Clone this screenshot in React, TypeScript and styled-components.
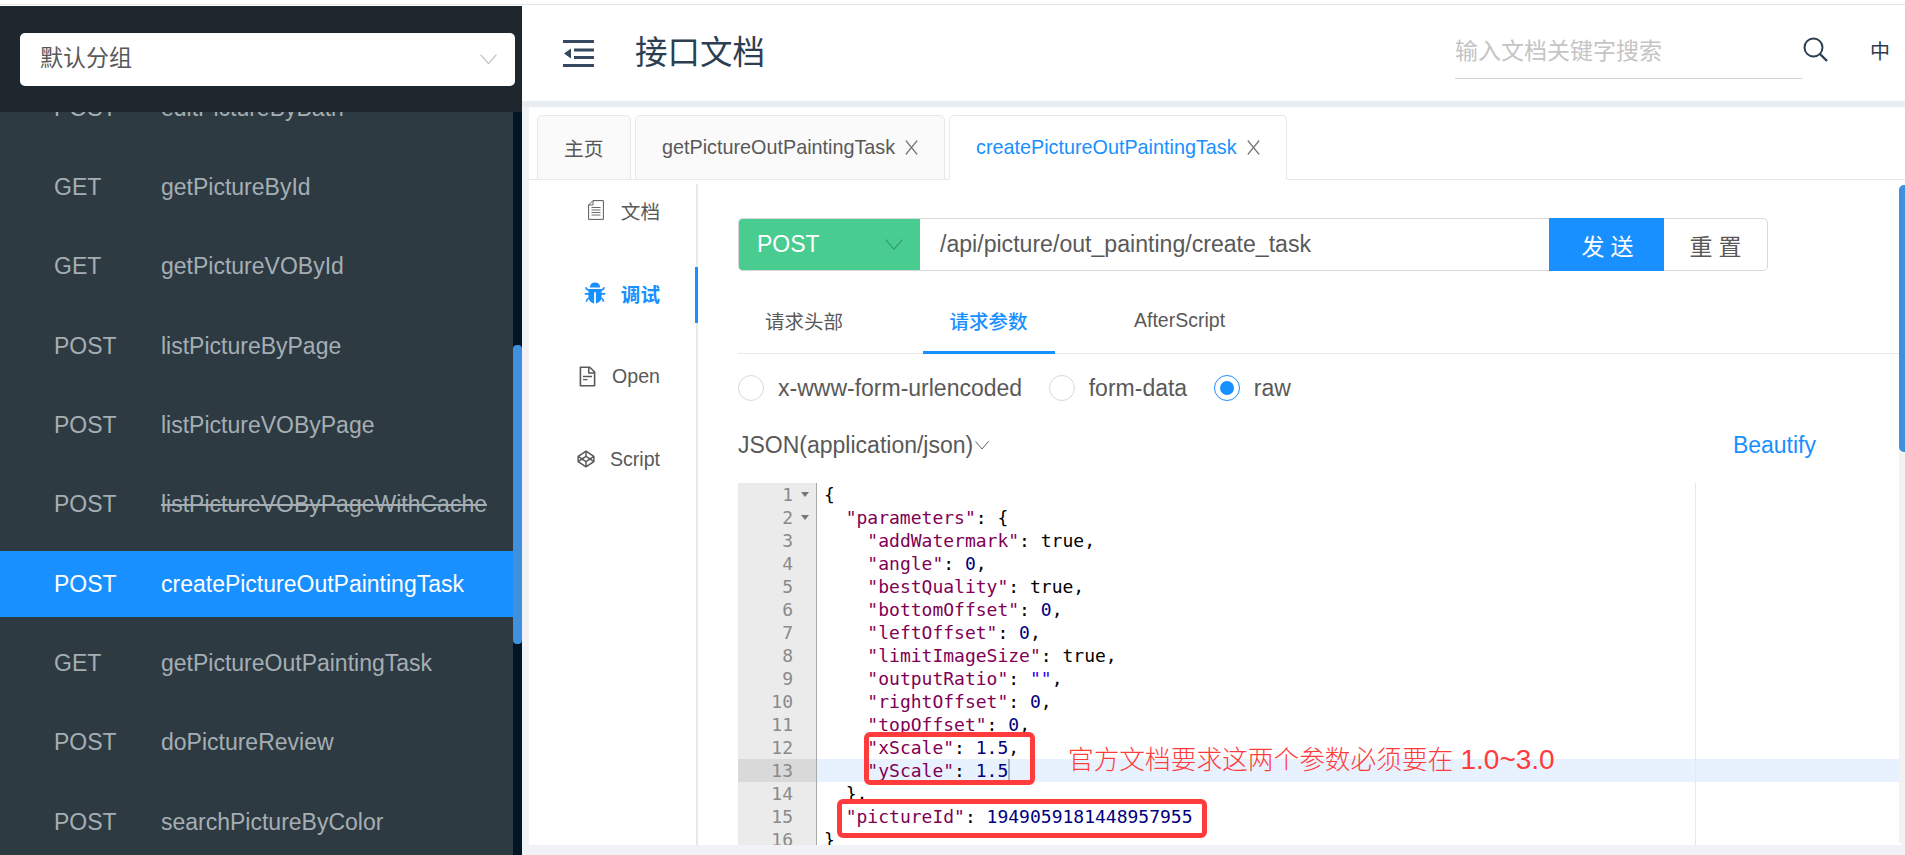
import React from 'react';
import styled, { createGlobalStyle } from 'styled-components';
import { AiFillBug, AiOutlineFileText, AiOutlineCodepen } from 'react-icons/ai';

const GlobalStyle = createGlobalStyle`
  html, body {
    margin: 0;
    padding: 0;
    width: 1905px;
    height: 855px;
    overflow: hidden;
    background: #fff;
    font-family: "Liberation Sans", "Noto Sans CJK SC", sans-serif;
  }
  * { box-sizing: border-box; }
`;

const Page = styled.div`
  width: 1905px;
  height: 855px;
  display: flex;
  flex-direction: column;
  overflow: hidden;
`;

const TopStrip = styled.div`
  flex: none;
  height: 5px;
  background: #fff;
  border-bottom: 1px solid #e4e4e4;
`;

const Layout = styled.div`
  flex: 1;
  min-height: 0;
  display: flex;
`;

const Sidebar = styled.aside`
  flex: none;
  width: 522px;
  margin-top: 1px;
  display: flex;
  flex-direction: column;
  background: #2d3a42;
`;

const SideHeader = styled.div`
  flex: none;
  height: 106px;
  padding: 27px 7px 0 20px;
  background: #1f272e;
`;

const GroupSelect = styled.div`
  height: 53px;
  padding: 0 18px 0 20px;
  display: flex;
  align-items: center;
  justify-content: space-between;
  background: #fff;
  border-radius: 5px;
  color: #595959;
  font-size: 23px;
`;

const GroupLabel = styled.span`
  margin-top: -7px;
`;

const SideBody = styled.div`
  flex: 1;
  min-height: 0;
  display: flex;
  overflow: hidden;
`;

const ApiList = styled.ul`
  flex: 1;
  margin: -37px 0 0;
  padding: 0;
  list-style: none;
`;

const ApiRow = styled.li<{ $active?: boolean }>`
  height: 66px;
  margin-bottom: 13.35px;
  padding-left: 54px;
  display: flex;
  align-items: center;
  font-size: 23px;
  background: ${p => (p.$active ? '#1890ff' : 'transparent')};
  color: ${p => (p.$active ? '#fff' : '#a5aeb3')};
`;

const ApiMethod = styled.span`
  width: 107px;
`;

const ApiName = styled.span<{ $deprecated?: boolean }>`
  text-decoration: ${p => (p.$deprecated ? 'line-through' : 'none')};
`;

const SideTrack = styled.div`
  flex: none;
  width: 9px;
  background: #001528;
`;

const SideThumb = styled.div`
  width: 9px;
  height: 299px;
  margin-top: 233px;
  border-radius: 4px;
  background: #4090e0;
`;

const Main = styled.main`
  flex: 1;
  min-width: 0;
  display: flex;
  flex-direction: column;
  background: #f0f2f5;
`;

const MainHeader = styled.header`
  flex: none;
  height: 102px;
  padding-left: 41px;
  display: flex;
  align-items: center;
  background: #fff;
  border-bottom: 6px solid #e9edf0;
`;

const HeaderTitle = styled.h1`
  margin: 0 0 8px 41px;
  font-size: 32.5px;
  font-weight: 400;
  color: #2c3e50;
`;

const SearchBox = styled.div`
  margin-left: auto;
  width: 347px;
  height: 54px;
  margin-top: -2px;
  border-bottom: 1px solid #d4d4d4;
  display: flex;
  align-items: center;
`;

const SearchInput = styled.input`
  width: 100%;
  border: none;
  outline: none;
  padding: 0;
  font-family: inherit;
  font-size: 23px;
  background: transparent;
  &::placeholder { color: #c4c4c4; opacity: 1; }
`;

const SearchIcon = styled.svg`
  flex: none;
  width: 25px;
  height: 25px;
  margin: -8px 0 0 1px;
`;

const LangText = styled.span`
  margin: -6px 15px 0 42px;
  font-size: 20px;
  color: #2c3e50;
`;

const Content = styled.div`
  flex: none;
  height: 738px;
  margin-left: 7px;
  display: flex;
  flex-direction: column;
  background: #fff;
  position: relative;
`;

const TabBar = styled.div`
  flex: none;
  height: 73px;
  padding: 8px 0 0 8px;
  display: flex;
  gap: 4px;
  border-bottom: 1px solid #e8e8e8;
`;

const PageTab = styled.div<{ $active?: boolean; $width: number }>`
  width: ${p => p.$width}px;
  height: 65px;
  padding-left: 26px;
  display: flex;
  align-items: center;
  font-size: 19.8px;
  border: 1px solid #e8e8e8;
  border-bottom-color: ${p => (p.$active ? '#fff' : '#e8e8e8')};
  border-radius: 5px 5px 0 0;
  background: ${p => (p.$active ? '#fff' : '#fafafa')};
  color: ${p => (p.$active ? '#1890ff' : '#595959')};
`;

const TabClose = styled.svg`
  flex: none;
  width: 13px;
  height: 15px;
  margin-left: 10px;
`;

const Split = styled.div`
  flex: 1;
  min-height: 0;
  display: flex;
`;

const SideNav = styled.nav`
  flex: none;
  width: 169px;
  margin-top: 4px;
  border-right: 2px solid #e8e8e8;
`;

const NavItem = styled.div<{ $active?: boolean; $gap: number }>`
  width: 169px;
  height: 56px;
  margin-bottom: 27px;
  padding: 0 35px 4px 0;
  display: flex;
  align-items: center;
  justify-content: flex-end;
  gap: ${p => p.$gap}px;
  font-size: 19.6px;
  font-weight: ${p => (p.$active ? 600 : 400)};
  color: ${p => (p.$active ? '#1890ff' : '#595959')};
  border-right: 3px solid ${p => (p.$active ? '#1890ff' : 'transparent')};
`;

const Panel = styled.section`
  flex: 1;
  min-width: 0;
  padding: 38px 6px 0 40px;
  display: flex;
  flex-direction: column;
`;

const RequestBar = styled.div`
  flex: none;
  width: 1030px;
  height: 53px;
  display: flex;
`;

const MethodSelect = styled.div`
  flex: none;
  width: 182px;
  padding: 0 17px 0 18px;
  display: flex;
  align-items: center;
  justify-content: space-between;
  background: #49cc90;
  border: 1px solid #d9d9d9;
  border-right: none;
  border-radius: 5px 0 0 5px;
  color: #fff;
  font-size: 23px;
`;

const UrlInput = styled.input`
  flex: 1;
  min-width: 0;
  padding: 0 0 0 20px;
  border: 1px solid #d9d9d9;
  border-left: none;
  border-right: none;
  outline: none;
  font-family: inherit;
  font-size: 23.1px;
  color: #595959;
`;

const SendButton = styled.button`
  flex: none;
  width: 115px;
  border: none;
  padding: 0 0 0 8px;
  background: #1890ff;
  color: #fff;
  font-family: inherit;
  font-size: 23px;
  letter-spacing: 6px;
`;

const ResetButton = styled.button`
  flex: none;
  width: 104px;
  padding: 0 0 0 6px;
  background: #fff;
  border: 1px solid #d9d9d9;
  border-left: none;
  border-radius: 0 5px 5px 0;
  color: #595959;
  font-family: inherit;
  font-size: 23px;
  letter-spacing: 6px;
`;

const SubTabs = styled.div`
  flex: none;
  height: 57px;
  margin-top: 26px;
  display: flex;
  gap: 52.5px;
  border-bottom: 1px solid #e8e8e8;
`;

const SubTab = styled.div<{ $active?: boolean }>`
  height: 57px;
  padding: 0 27px 7px;
  display: flex;
  align-items: center;
  font-size: 19.5px;
  font-weight: ${p => (p.$active ? 500 : 400)};
  color: ${p => (p.$active ? '#1890ff' : '#595959')};
  border-bottom: 3px solid ${p => (p.$active ? '#1890ff' : 'transparent')};
`;

const RadioRow = styled.div`
  flex: none;
  height: 26px;
  margin-top: 21px;
  display: flex;
  gap: 26.6px;
`;

const RadioItem = styled.label`
  display: flex;
  align-items: center;
  gap: 14px;
  font-size: 23px;
  color: #595959;
`;

const RadioMark = styled.span<{ $checked?: boolean }>`
  width: 26px;
  height: 26px;
  border-radius: 50%;
  display: flex;
  align-items: center;
  justify-content: center;
  border: 1px solid ${p => (p.$checked ? '#1890ff' : '#d9d9d9')};
  &::after {
    content: '';
    width: 14px;
    height: 14px;
    border-radius: 50%;
    background: ${p => (p.$checked ? '#1890ff' : 'transparent')};
  }
`;

const FormatRow = styled.div`
  flex: none;
  width: 1078px;
  height: 30px;
  margin-top: 29px;
  display: flex;
  align-items: center;
  justify-content: space-between;
  font-size: 23px;
  color: #595959;
`;

const FormatLabel = styled.span`
  display: flex;
  align-items: center;
  gap: 2px;
`;

const BeautifyLink = styled.a`
  color: #1890ff;
`;

const Editor = styled.div`
  flex: 1;
  min-height: 0;
  margin-top: 23px;
  overflow: hidden;
  position: relative;
`;

const CodeLine = styled.div<{ $active?: boolean }>`
  height: 23px;
  display: flex;
  font-family: "DejaVu Sans Mono", monospace;
  font-size: 18px;
  line-height: 23px;
  background: ${p => (p.$active ? '#e8f2ff' : 'transparent')};
`;

const Gutter = styled.div<{ $active?: boolean }>`
  flex: none;
  width: 79px;
  display: flex;
  justify-content: flex-end;
  background: ${p => (p.$active ? '#d9d9d9' : '#ebebeb')};
  border-right: 1px solid #a8a8a8;
  color: #8a8a8a;
`;

const FoldSlot = styled.span`
  flex: none;
  width: 23px;
  display: flex;
  align-items: center;
  justify-content: center;
`;

const FoldArrow = styled.span`
  width: 0;
  height: 0;
  border-left: 4px solid transparent;
  border-right: 4px solid transparent;
  border-top: 5px solid #777;
`;

const CodeText = styled.pre`
  margin: 0 0 0 7px;
  font: inherit;
  color: #000;
  position: relative;
  z-index: 1;
`;

const KeyToken = styled.span`color: #7f0055;`;
const NumToken = styled.span`color: #000080;`;
const StrToken = styled.span`color: #2a00ff;`;

const Caret = styled.span`
  display: inline-block;
  width: 2px;
  height: 23px;
  vertical-align: top;
  background: #a9b4bf;
`;

const PrintMargin = styled.div`
  position: absolute;
  top: 0;
  bottom: 0;
  left: 957px;
  width: 1px;
  background: #e8e8e8;
`;

const RedBox = styled.div<{ $left: number; $top: number; $width: number; $height: number }>`
  position: absolute;
  left: ${p => p.$left}px;
  top: ${p => p.$top}px;
  width: ${p => p.$width}px;
  height: ${p => p.$height}px;
  border: 5px solid #ff3b3b;
  border-radius: 6px;
  z-index: 2;
`;

const RedNote = styled.div`
  position: absolute;
  left: 330px;
  top: 260px;
  z-index: 2;
  font-family: "Liberation Sans", "Noto Sans CJK SC", sans-serif;
  font-size: 25.7px;
  line-height: 34px;
  font-weight: 300;
  color: #ff3b3b;
  white-space: nowrap;
`;

const RedNoteRange = styled.span`
  font-size: 28px;
`;

const PageTrack = styled.div`
  position: absolute;
  right: 0;
  top: 78px;
  bottom: 0;
  width: 6px;
  border-radius: 5px 0 0 5px;
  background: #f2f2f2;
`;

const PageThumb = styled.div`
  height: 267px;
  border-radius: 5px 0 0 5px;
  background: #4090e0;
`;

const Chevron = ({ size, color }: { size: number; color: string }) => (
  <svg width={size} height={size * 0.62} viewBox="0 0 16 10" fill="none">
    <path d="M.5.5 8 9.2 15.5.5" stroke={color} strokeWidth="1.1" />
  </svg>
);

const CloseMark = () => (
  <TabClose viewBox="0 0 13 15" fill="none">
    <path d="M.8.5 12.2 14.5M12.2.5.8 14.5" stroke="#777" strokeWidth="1.2" />
  </TabClose>
);

const CollapseIcon = () => (
  <svg width="31" height="27" viewBox="0 0 31 27">
    <path d="M0 0h31v3H0zM11 8.5h20v3H11zM11 16h20v3H11zM0 24h31v3H0zM8 8.5v10L1 13.5z" fill="#34495e" />
  </svg>
);

const DocIcon = () => (
  <svg width="16" height="20" viewBox="0 0 16 20" fill="none" stroke="#595959">
    <path d="M5 .6h10.4v18.8H.6V5z" />
    <path d="M5 .6V5H.6M3.5 7.5h9M3.5 10h9M3.5 12.5h9M3.5 15h9" strokeWidth=".9" />
  </svg>
);

const apis = [
  { method: 'POST', name: 'editPictureByBath' },
  { method: 'GET', name: 'getPictureById' },
  { method: 'GET', name: 'getPictureVOById' },
  { method: 'POST', name: 'listPictureByPage' },
  { method: 'POST', name: 'listPictureVOByPage' },
  { method: 'POST', name: 'listPictureVOByPageWithCache', deprecated: true },
  { method: 'POST', name: 'createPictureOutPaintingTask', active: true },
  { method: 'GET', name: 'getPictureOutPaintingTask' },
  { method: 'POST', name: 'doPictureReview' },
  { method: 'POST', name: 'searchPictureByColor' },
];

const field = (key: string, value: React.ReactNode, indent = '    ') => (
  <>
    {indent}
    <KeyToken>"{key}"</KeyToken>: {value}
  </>
);

const codeLines: React.ReactNode[] = [
  '{',
  <>  <KeyToken>"parameters"</KeyToken>: {'{'}</>,
  <>{field('addWatermark', 'true')},</>,
  <>{field('angle', <NumToken>0</NumToken>)},</>,
  <>{field('bestQuality', 'true')},</>,
  <>{field('bottomOffset', <NumToken>0</NumToken>)},</>,
  <>{field('leftOffset', <NumToken>0</NumToken>)},</>,
  <>{field('limitImageSize', 'true')},</>,
  <>{field('outputRatio', <StrToken>""</StrToken>)},</>,
  <>{field('rightOffset', <NumToken>0</NumToken>)},</>,
  <>{field('topOffset', <NumToken>0</NumToken>)},</>,
  <>{field('xScale', <NumToken>1.5</NumToken>)},</>,
  <>{field('yScale', <NumToken>1.5</NumToken>)}<Caret /></>,
  '  },',
  <>{field('pictureId', <NumToken>1949059181448957955</NumToken>, '  ')}</>,
  '}',
];

const App: React.FC = () => {
  return (
    <Page>
      <GlobalStyle />
      <TopStrip />
      <Layout>
        <Sidebar>
          <SideHeader>
            <GroupSelect>
              <GroupLabel>默认分组</GroupLabel>
              <Chevron size={17} color="#bfbfbf" />
            </GroupSelect>
          </SideHeader>
          <SideBody>
            <ApiList>
              {apis.map(api => (
                <ApiRow key={api.name} $active={api.active}>
                  <ApiMethod>{api.method}</ApiMethod>
                  <ApiName $deprecated={api.deprecated}>{api.name}</ApiName>
                </ApiRow>
              ))}
            </ApiList>
            <SideTrack>
              <SideThumb />
            </SideTrack>
          </SideBody>
        </Sidebar>

        <Main>
          <MainHeader>
            <CollapseIcon />
            <HeaderTitle>接口文档</HeaderTitle>
            <SearchBox>
              <SearchInput placeholder="输入文档关键字搜索" readOnly />
            </SearchBox>
            <SearchIcon viewBox="0 0 25 25" fill="none" stroke="#2c3e50">
              <circle cx="10.5" cy="10.5" r="9" strokeWidth="2" />
              <path d="M17 17l7 7" strokeWidth="2.4" />
            </SearchIcon>
            <LangText>中</LangText>
          </MainHeader>

          <Content>
            <TabBar>
              <PageTab $width={94}>主页</PageTab>
              <PageTab $width={310}>
                getPictureOutPaintingTask
                <CloseMark />
              </PageTab>
              <PageTab $width={338} $active>
                createPictureOutPaintingTask
                <CloseMark />
              </PageTab>
            </TabBar>

            <Split>
              <SideNav>
                <NavItem $gap={17}>
                  <DocIcon />
                  文档
                </NavItem>
                <NavItem $gap={14} $active>
                  <AiFillBug size={24} />
                  调试
                </NavItem>
                <NavItem $gap={13}>
                  <AiOutlineFileText size={23} />
                  Open
                </NavItem>
                <NavItem $gap={13}>
                  <AiOutlineCodepen size={22} />
                  Script
                </NavItem>
              </SideNav>

              <Panel>
                <RequestBar>
                  <MethodSelect>
                    POST
                    <Chevron size={18} color="#2f9e6e" />
                  </MethodSelect>
                  <UrlInput value="/api/picture/out_painting/create_task" readOnly />
                  <SendButton>发送</SendButton>
                  <ResetButton>重置</ResetButton>
                </RequestBar>

                <SubTabs>
                  <SubTab>请求头部</SubTab>
                  <SubTab $active>请求参数</SubTab>
                  <SubTab>AfterScript</SubTab>
                </SubTabs>

                <RadioRow>
                  <RadioItem>
                    <RadioMark />
                    x-www-form-urlencoded
                  </RadioItem>
                  <RadioItem>
                    <RadioMark />
                    form-data
                  </RadioItem>
                  <RadioItem>
                    <RadioMark $checked />
                    raw
                  </RadioItem>
                </RadioRow>

                <FormatRow>
                  <FormatLabel>
                    JSON(application/json)
                    <Chevron size={14} color="#595959" />
                  </FormatLabel>
                  <BeautifyLink>Beautify</BeautifyLink>
                </FormatRow>

                <Editor>
                  <PrintMargin />
                  {codeLines.map((line, i) => (
                    <CodeLine key={i} $active={i === 12}>
                      <Gutter $active={i === 12}>
                        {i + 1}
                        <FoldSlot>{i < 2 && <FoldArrow />}</FoldSlot>
                      </Gutter>
                      <CodeText>{line}</CodeText>
                    </CodeLine>
                  ))}
                  <RedBox $left={126} $top={249} $width={171} $height={53} />
                  <RedBox $left={99} $top={316} $width={370} $height={39} />
                  <RedNote>
                    官方文档要求这两个参数必须要在 <RedNoteRange>1.0~3.0</RedNoteRange>
                  </RedNote>
                </Editor>
              </Panel>
            </Split>
            <PageTrack>
              <PageThumb />
            </PageTrack>
          </Content>
        </Main>
      </Layout>
    </Page>
  );
};

export default App;
